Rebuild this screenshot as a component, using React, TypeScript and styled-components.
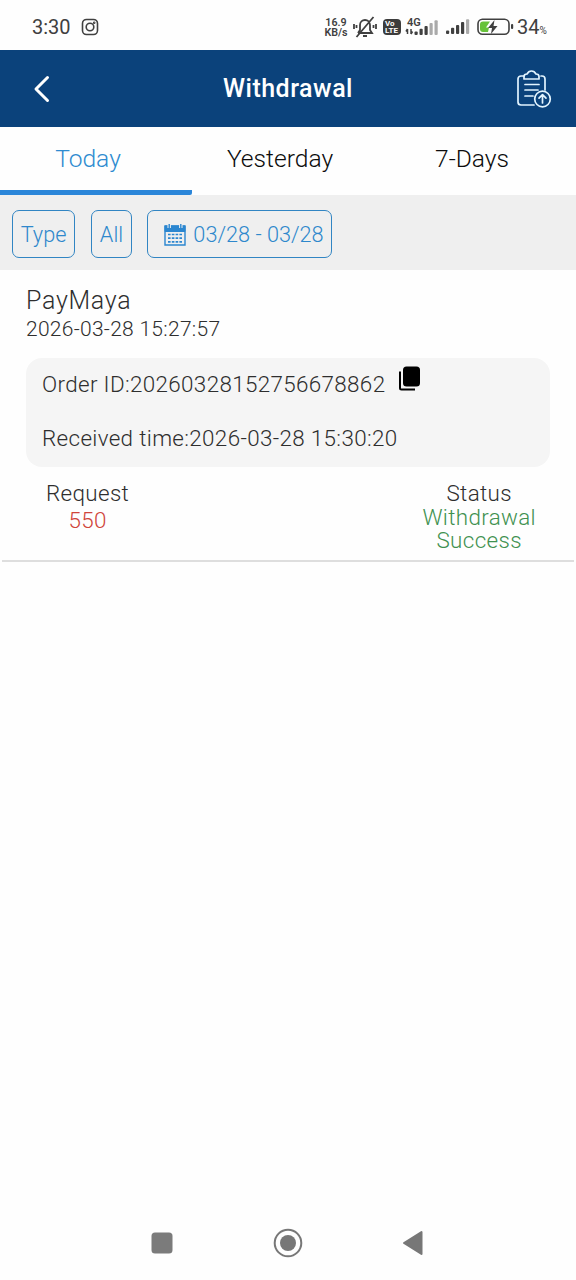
import React from "react";
import styled, { createGlobalStyle } from "styled-components";

const GlobalStyle = createGlobalStyle`
  * { box-sizing: border-box; }
  body { margin: 0; background: #fff; font-family: Roboto, "Liberation Sans", sans-serif; font-weight: 300; color: #2e2e2e; }
`;
const Screen = styled.div`
  width: 576px; height: 1280px; display: flex; flex-direction: column; background: #fefefe; overflow: hidden;
`;
const StatusBar = styled.div`
  height: 50px; flex: none; display: flex; align-items: center; padding: 4px 28px 0 32px; color: #404040; font-weight: 400;
`;
const Clock = styled.span`font-size: 20px; line-height: 24px; width: 49px;`;
const StatusIcons = styled.div`margin-left: auto; display: flex; align-items: center; svg { display: block; flex: none; }`;
const NetSpeed = styled.div`
  width: 24px; flex: none; font-size: 10.7px; line-height: 10px; font-weight: 600; text-align: center; white-space: nowrap; margin: 1px 5px 0 0;
  div { height: 10px; }
`;
const Volte = styled.div`
  width: 18px; height: 16px; flex: none; border-radius: 4px; background: #3c3c3c; color: #fff; font-size: 8px; line-height: 7px;
  font-weight: 700; padding: 1px 0 0 2px; margin: 0 5px 0 6px;
`;
const Mobile = styled.div`width: 33px; height: 20px; flex: none; margin-right: 7px;`;
const Generation = styled.div`font-size: 11px; line-height: 11px; height: 8px; font-weight: 600; padding-left: 1px;`;
const Signal = styled.div`height: 20px; margin: -4px 7px 0 0;`;
const Percent = styled.div`width: 31px; font-size: 20px; line-height: 24px; white-space: nowrap; margin: 3px 0 0 3px; small { font-size: 10px; }`;

const Header = styled.header`
  height: 77px; flex: none; background: #0b427b; color: #fff; display: grid; grid-template-columns: 100px 1fr 100px; align-items: center;
  h1 { margin: 0; text-align: center; font-size: 25px; line-height: 30px; font-weight: 500; letter-spacing: 0.5px; }
`;
const Back = styled.div`padding-left: 33px; display: flex;`;
const Action = styled.div`padding-left: 40px; display: flex;`;
const Tabs = styled.nav`height: 68px; flex: none; display: grid; grid-template-columns: repeat(3, 1fr);`;
const Tab = styled.div<{ $active?: boolean }>`
  font-size: 24.6px; line-height: 30px; padding: 17px 16px 0 0; text-align: center;
  color: ${p => (p.$active ? "#2e8bd0" : "#0c0c0c")};
  border-bottom: 5px solid ${p => (p.$active ? "#2b86d9" : "transparent")};
  border-bottom-right-radius: 2px;
`;
const Filters = styled.div`
  height: 75px; flex: none; background: #efefef; display: flex; align-items: center; padding: 3px 12px 0; 
`;
const Filter = styled.button<{ $width: number; $gap?: number }>`
  width: ${p => p.$width}px; height: 48px; margin: 0 ${p => p.$gap ?? 0}px 0 0; padding: 2px 0 0; border: 1px solid #3185c3; border-radius: 7px;
  background: transparent; color: #2e88cc; font: 300 21.7px/28px Roboto, sans-serif; display: flex; align-items: center; justify-content: center;
  white-space: nowrap;
  svg { margin: -1px 7px 0 9px; }
`;
const Record = styled.section`
  height: 292px; flex: none; padding: 17px 22px 0 24px; margin: 0 2px; border-bottom: 2px solid #dedede;
`;
const Provider = styled.div`font-size: 25px; line-height: 28px; letter-spacing: 0.7px;`;
const Stamp = styled.div`font-size: 21px; line-height: 28px; letter-spacing: 0.28px;`;
const Details = styled.div`
  margin-top: 15px; width: 524px; height: 109px; border-radius: 16px; background: #f5f5f5; padding: 12px 16px;
`;
const Line = styled.div`
  display: flex; font-size: 22.4px; letter-spacing: 0.35px; line-height: 28px; height: 54px; white-space: nowrap;
  svg { margin: -4px 0 0 14px; }
`;
const Totals = styled.div`display: flex; justify-content: space-between; padding: 12px 14px 0 20px; width: 524px;`;
const Total = styled.div`text-align: center; font-size: 22.4px; line-height: 28px; letter-spacing: 0.35px;`;
const Amount = styled.div`color: #d0453b; line-height: 26px;`;
const Outcome = styled.div`color: #3f9150; line-height: 23px; margin-top: -1px;`;
const NavBar = styled.footer`
  margin-top: auto; height: 74px; flex: none; display: flex; justify-content: space-between; align-items: center; padding: 0 153px 0 151px;
`;

const Bars = ({ faded }: { faded: number }) => (
  <g>
    {[0, 1, 2, 3, 4].map(i => (
      <rect key={i} x={i * 5} y={11 - i * 2.8} width="3.2" height={3.4 + i * 2.8} rx="1" fill={i >= faded ? "#aaa" : "#404040"} />
    ))}
  </g>
);

export default function App() {
  return (
    <Screen>
      <GlobalStyle />
      <StatusBar>
        <Clock>3:30</Clock>
        <svg width="18" height="18" viewBox="0 0 18 18" fill="none" stroke="#404040" strokeWidth="1.6">
          <rect x="1.5" y="1.5" width="15" height="15" rx="4" /><circle cx="9" cy="9" r="3.8" /><circle cx="13.2" cy="4.8" r=".5" />
        </svg>
        <StatusIcons>
          <NetSpeed><div>16.9</div><div>KB/s</div></NetSpeed>
          <svg width="24" height="22" viewBox="0 0 24 22" fill="none" stroke="#404040" strokeWidth="1.8">
            <path d="M5 17h14l-2-3V9a5 5 0 0 0-10 0v5l-2 3M10 20h4M3.5 21 20.5 1M1 8v5M3.5 9v3M20.5 9v3M23 8v5" />
          </svg>
          <Volte>Vo<br />LTE</Volte>
          <Mobile>
            <Generation>4G</Generation>
            <svg width="33" height="12" viewBox="0 0 33 12" overflow="visible">
              <path d="M1.500 4v5M5 4v5M0 6.500 1.500 4M5 9 6.500 6.500" stroke="#404040" strokeWidth="1.5" />
              <g transform="translate(8.500 -4.500)"><Bars faded={3} /></g>
            </svg>
          </Mobile>
          <Signal><svg width="24" height="20" viewBox="0 -4.500 24 20"><Bars faded={4} /></svg></Signal>
          <svg width="37" height="18" viewBox="0 0 37 18">
            <rect x="1" y="1.2" width="31" height="15" rx="4.5" fill="none" stroke="#404040" strokeWidth="1.6" />
            <path d="M6 3.5h7l-4 6h3l-1 4.500H6a3 3 0 0 1-3-3V6.500a3 3 0 0 1 3-3Z" fill="#67c23a" />
            <path d="m17.500 2-6.500 8h4l-1 6 6.500-8h-4z" fill="#404040" /><rect x="34" y="6" width="2.2" height="5" rx="1" fill="#404040" />
          </svg>
          <Percent>34<small>%</small></Percent>
        </StatusIcons>
      </StatusBar>
      <Header>
        <Back>
          <svg width="18" height="28" viewBox="0 0 18 28" fill="none" stroke="#fff" strokeWidth="3" strokeLinecap="round" strokeLinejoin="round"><path d="M14.500 2.500 3 14l11.500 11.500" /></svg>
        </Back>
        <h1>Withdrawal</h1>
        <Action>
          <svg width="38" height="40" viewBox="0 0 38 40" fill="none" stroke="#e2f4ff" strokeWidth="1.7" strokeLinecap="round" strokeLinejoin="round">
            <path d="M8 7H5a3 3 0 0 0-3 3v23a3 3 0 0 0 3 3h13M25 7h1a3 3 0 0 1 3 3v11" />
            <path d="M8 10V7.500Q8 5 11 5q1.500-3 4.500-3T20 5q3 0 3 2.500V10Z" />
            <path d="M9 15.500h14M9 21h13M9 27h8" /><circle cx="26.500" cy="30" r="7.800" /><path d="M26.500 34v-8M23 29.200l3.500-3.500 3.500 3.500" />
          </svg>
        </Action>
      </Header>
      <Tabs><Tab $active>Today</Tab><Tab>Yesterday</Tab><Tab>7-Days</Tab></Tabs>
      <Filters>
        <Filter $width={63} $gap={16}>Type</Filter>
        <Filter $width={41} $gap={15}>All</Filter>
        <Filter $width={185}>
          <svg width="22" height="22" viewBox="0 0 22 22" fill="none" stroke="#2b86d0">
            <path d="M1 2h20v19H1z" strokeWidth="1.400" /><path d="M1 2h20v5.500H1z" fill="#2b86d0" />
            <path d="M5.200 0v4M16.800 0v4" stroke="#efefef" strokeWidth="3.400" /><path d="M5.200 0v4M16.800 0v4" strokeWidth="1.400" />
            <path d="M4 10.500h14M4 14.200h14M4 17.900h14" strokeWidth="1.700" strokeDasharray="2.600 1.200" />
          </svg>
          03/28 - 03/28
        </Filter>
      </Filters>
      <Record>
        <Provider>PayMaya</Provider>
        <Stamp>2026-03-28 15:27:57</Stamp>
        <Details>
          <Line>
            Order ID:20260328152756678862
            <svg width="21" height="25" viewBox="0 0 21 25"><rect x="4" y=".5" width="17" height="20" rx="3.500" fill="#000" /><path d="M1 5.500V22q0 1.500 1.500 1.500H16" fill="none" stroke="#000" strokeWidth="2" /></svg>
          </Line>
          <Line>Received time:2026-03-28 15:30:20</Line>
        </Details>
        <Totals>
          <Total>Request<Amount>550</Amount></Total>
          <Total>Status<Outcome>Withdrawal<br />Success</Outcome></Total>
        </Totals>
      </Record>
      <NavBar>
        <svg width="22" height="22"><rect x=".5" y=".5" width="21" height="21" rx="3.500" fill="#7b7b7b" /></svg>
        <svg width="30" height="30"><circle cx="15" cy="15" r="13.300" fill="none" stroke="#777" strokeWidth="2" /><circle cx="15" cy="15" r="8" fill="#777" /></svg>
        <svg width="21" height="26"><path d="M19.500 2v22L2 13Z" fill="#777" stroke="#777" strokeWidth="2" strokeLinejoin="round" /></svg>
      </NavBar>
    </Screen>
  );
}
